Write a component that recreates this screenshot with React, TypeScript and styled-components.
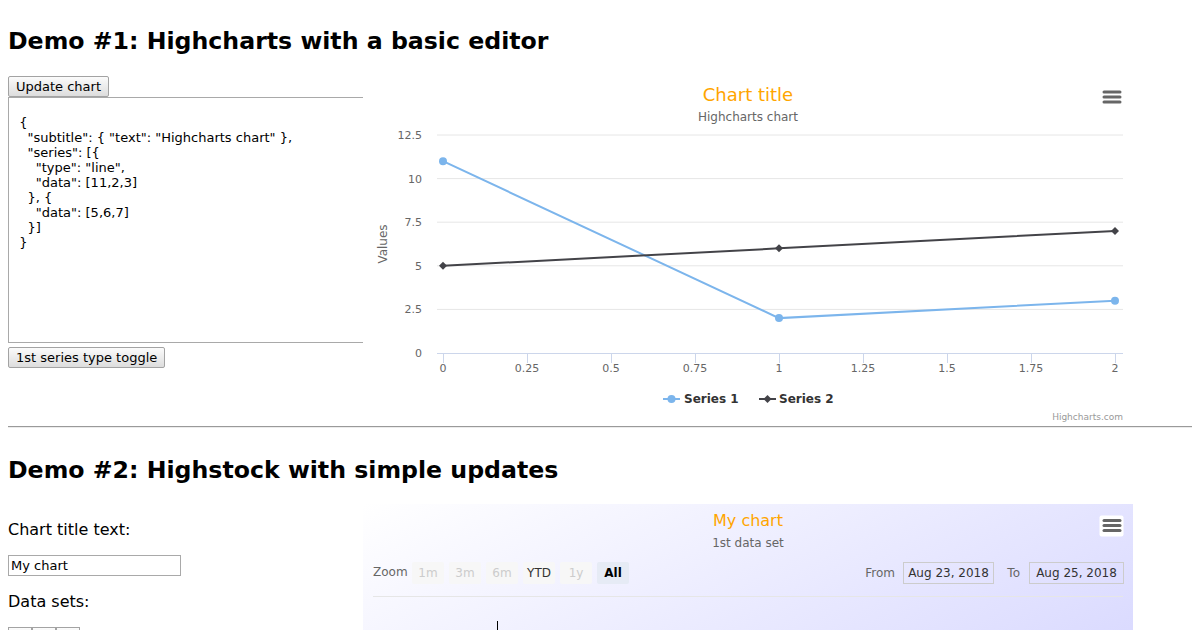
import React from "react";
import styled, { createGlobalStyle } from "styled-components";

const GlobalStyle = createGlobalStyle`
  html, body {
    overflow: hidden;
  }
  body {
    margin: 8px;
    font-family: "DejaVu Sans", sans-serif;
    color: #000;
    background: #fff;
  }
`;

const Heading = styled.h2<{ $top: number }>`
  font-size: 23.65px;
  line-height: 28px;
  font-weight: bold;
  margin: ${(p) => p.$top}px 0 20px;
`;

const DemoRow = styled.div`
  display: flex;
  align-items: flex-start;
`;

const EditorColumn = styled.div`
  width: 355px;
  flex: none;
  display: flex;
  flex-direction: column;
  align-items: flex-start;
  padding-top: 1px;
`;

const FormColumn = styled.div`
  width: 355px;
  flex: none;
`;

const Button = styled.button<{ $gap?: number }>`
  font-family: "DejaVu Sans", sans-serif;
  font-size: 13px;
  height: 21px;
  padding: 0 7px;
  margin-top: ${(p) => p.$gap || 0}px;
  color: #000;
  background: linear-gradient(#fbfbfb, #dddddd);
  border: 1px solid #a3a3a3;
  border-radius: 2px;
`;

const SmallButton = styled(Button)`
  width: 24px;
  padding: 0;
  border-radius: 0;
`;

const Editor = styled.textarea`
  display: block;
  box-sizing: border-box;
  width: 355px;
  height: 246px;
  margin: 0;
  padding: 2px;
  font-family: "DejaVu Sans", sans-serif;
  font-size: 13px;
  line-height: normal;
  border: 1px solid #a9a9a9;
  border-right: none;
  resize: none;
  outline: none;
`;

const Hr = styled.hr`
  margin: 3px 0 0;
  border: none;
  border-top: 1px solid #9a9a9a;
  border-bottom: 1px solid #ececec;
`;

const Label = styled.p`
  font-size: 16px;
  margin: 16px 0;
`;

const TextInput = styled.input`
  display: block;
  box-sizing: border-box;
  width: 173px;
  height: 21px;
  margin: 0;
  padding: 1px 2px;
  font-family: "DejaVu Sans", sans-serif;
  font-size: 13px;
  border: 1px solid #a9a9a9;
`;

const ButtonGroup = styled.div`
  display: flex;
`;

const ChartSvg = styled.svg`
  display: block;
  flex: none;
  font-family: "DejaVu Sans", sans-serif;
`;

const editorText = `
  {
    "subtitle": { "text": "Highcharts chart" },
    "series": [{
      "type": "line",
      "data": [11,2,3]
    }, {
      "data": [5,6,7]
    }]
  }`;

const yScale = 17.44;
const plotBottom = 278;
const yOf = (v: number) => plotBottom - v * yScale;
const xOf = (i: number) => 80 + 336 * i;

const series1 = [11, 2, 3];
const series2 = [5, 6, 7];

const yTicks = [0, 2.5, 5, 7.5, 10, 12.5];
const xLabels = ["0", "0.25", "0.5", "0.75", "1", "1.25", "1.5", "1.75", "2"];

const diamond = (x: number, y: number) =>
  `M ${x} ${y - 4} L ${x + 4} ${y} L ${x} ${y + 4} L ${x - 4} ${y} Z`;

const MenuLines = ({ x1, x2, ys }: { x1: number; x2: number; ys: number[] }) => (
  <g stroke="#666" strokeWidth={3} strokeLinecap="round">
    {ys.map((y) => (
      <line key={y} x1={x1} x2={x2} y1={y} y2={y} />
    ))}
  </g>
);

const LineChart = () => (
  <ChartSvg width={770} height={348} viewBox="0 0 770 348">
    <rect width={770} height={348} fill="#fff" />
    <text x={385} y={26} textAnchor="middle" fontSize={18} fill="#FFA500">
      Chart title
    </text>
    <text x={385} y={46} textAnchor="middle" fontSize={12} fill="#666">
      Highcharts chart
    </text>
    <MenuLines x1={741} x2={757} ys={[17, 22, 27]} />

    {yTicks.slice(1).map((v) => (
      <line key={v} x1={74} x2={760} y1={yOf(v)} y2={yOf(v)} stroke="#e6e6e6" />
    ))}
    {yTicks.map((v) => (
      <text key={v} x={59} y={yOf(v) + 4} textAnchor="end" fontSize={11} fill="#666">
        {v}
      </text>
    ))}
    <text
      x={0}
      y={0}
      transform="translate(24 169) rotate(-90)"
      textAnchor="middle"
      fontSize={12}
      fill="#666"
    >
      Values
    </text>

    <line x1={74} x2={760} y1={278.5} y2={278.5} stroke="#ccd6eb" />
    {xLabels.map((l, i) => (
      <g key={l}>
        <line x1={80.5 + 84 * i} x2={80.5 + 84 * i} y1={278} y2={288} stroke="#ccd6eb" />
        <text x={80 + 84 * i} y={297} textAnchor="middle" fontSize={11} fill="#666">
          {l}
        </text>
      </g>
    ))}

    <polyline
      points={series1.map((v, i) => `${xOf(i)},${yOf(v)}`).join(" ")}
      fill="none"
      stroke="#7cb5ec"
      strokeWidth={2}
    />
    {series1.map((v, i) => (
      <circle key={i} cx={xOf(i)} cy={yOf(v)} r={4} fill="#7cb5ec" />
    ))}
    <polyline
      points={series2.map((v, i) => `${xOf(i)},${yOf(v)}`).join(" ")}
      fill="none"
      stroke="#434348"
      strokeWidth={2}
    />
    {series2.map((v, i) => (
      <path key={i} d={diamond(xOf(i), yOf(v))} fill="#434348" />
    ))}

    <g fontSize={12} fontWeight="bold" fill="#333">
      <line x1={300} x2={317} y1={324} y2={324} stroke="#7cb5ec" strokeWidth={2} />
      <circle cx={308.5} cy={324} r={4} fill="#7cb5ec" />
      <text x={321} y={328}>Series 1</text>
      <line x1={396} x2={413} y1={324} y2={324} stroke="#434348" strokeWidth={2} />
      <path d={diamond(404.5, 324)} fill="#434348" />
      <text x={416} y={328}>Series 2</text>
    </g>
    <text x={760} y={345} textAnchor="end" fontSize={9} fill="#999">
      Highcharts.com
    </text>
  </ChartSvg>
);

type RangeState = "disabled" | "normal" | "selected";
const ranges: { label: string; state: RangeState }[] = [
  { label: "1m", state: "disabled" },
  { label: "3m", state: "disabled" },
  { label: "6m", state: "disabled" },
  { label: "YTD", state: "normal" },
  { label: "1y", state: "disabled" },
  { label: "All", state: "selected" },
];

const rangeFill: Record<RangeState, string> = {
  disabled: "#f7f7f7",
  normal: "#f7f7f7",
  selected: "#e6ebf5",
};
const rangeText: Record<RangeState, string> = {
  disabled: "#cccccc",
  normal: "#333333",
  selected: "#000000",
};

const StockChart = () => (
  <ChartSvg width={770} height={400} viewBox="0 0 770 400">
    <defs>
      <linearGradient id="stockBg" x1="0" y1="0" x2="1" y2="1">
        <stop offset="0" stopColor="#ffffff" />
        <stop offset="1" stopColor="rgb(200,200,255)" />
      </linearGradient>
    </defs>
    <rect width={770} height={400} fill="url(#stockBg)" />
    <text x={385} y={22} textAnchor="middle" fontSize={16} fill="#FFA500">
      My chart
    </text>
    <text x={385} y={43} textAnchor="middle" fontSize={12} fill="#666">
      1st data set
    </text>
    <rect x={736.5} y={11.5} width={24} height={21} rx={2} fill="#fff" />
    <MenuLines x1={741} x2={757} ys={[16.5, 21.5, 26.5]} />

    <text x={10} y={72} fontSize={12} fill="#666">
      Zoom
    </text>
    {ranges.map((r, i) => (
      <g key={r.label}>
        <rect x={49 + 37 * i} y={58} width={32} height={22} rx={2} fill={rangeFill[r.state]} />
        <text
          x={65 + 37 * i}
          y={73}
          textAnchor="middle"
          fontSize={12}
          fontWeight={r.state === "selected" ? "bold" : "normal"}
          fill={rangeText[r.state]}
        >
          {r.label}
        </text>
      </g>
    ))}

    <text x={532} y={73} textAnchor="end" fontSize={12} fill="#666">
      From
    </text>
    <rect x={540.5} y={58.5} width={90} height={21} fill="none" stroke="#ccc" />
    <text x={585.5} y={73} textAnchor="middle" fontSize={12} fill="#333">
      Aug 23, 2018
    </text>
    <text x={657} y={73} textAnchor="end" fontSize={12} fill="#666">
      To
    </text>
    <rect x={666.5} y={58.5} width={94} height={21} fill="none" stroke="#ccc" />
    <text x={713.5} y={73} textAnchor="middle" fontSize={12} fill="#333">
      Aug 25, 2018
    </text>

    <line x1={10} x2={760} y1={92.5} y2={92.5} stroke="#e6e6e6" />
    <line x1={134.5} x2={134.5} y1={117} y2={140} stroke="#000" />
  </ChartSvg>
);

export default function App() {
  return (
    <>
      <GlobalStyle />
      <Heading $top={19}>Demo #1: Highcharts with a basic editor</Heading>
      <DemoRow>
        <EditorColumn>
          <Button>Update chart</Button>
          <Editor readOnly value={editorText} />
          <Button $gap={4}>1st series type toggle</Button>
        </EditorColumn>
        <LineChart />
      </DemoRow>
      <Hr />
      <Heading $top={28}>Demo #2: Highstock with simple updates</Heading>
      <DemoRow>
        <FormColumn>
          <Label>Chart title text:</Label>
          <TextInput readOnly value="My chart" />
          <Label>Data sets:</Label>
          <ButtonGroup>
            <SmallButton>1</SmallButton>
            <SmallButton>2</SmallButton>
            <SmallButton>3</SmallButton>
          </ButtonGroup>
        </FormColumn>
        <StockChart />
      </DemoRow>
    </>
  );
}
